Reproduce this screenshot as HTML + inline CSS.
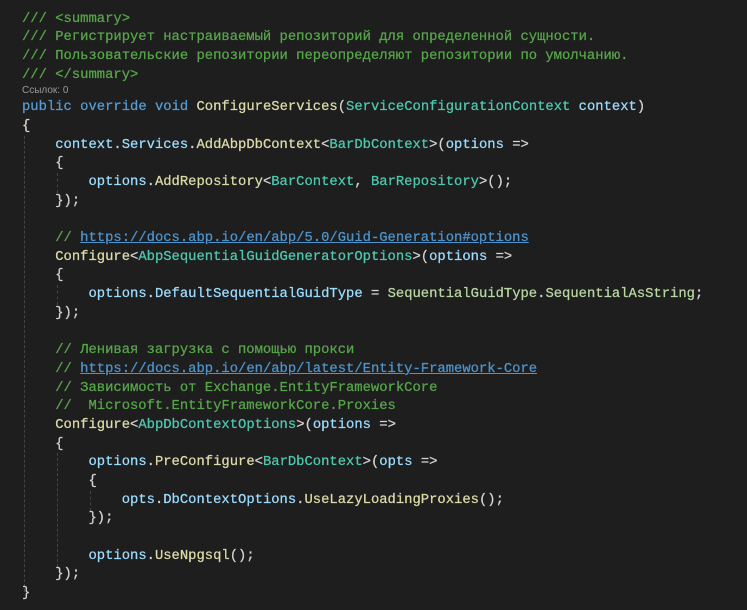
<!DOCTYPE html>
<html><head><meta charset="utf-8"><style>
html,body{margin:0;padding:0;background:#1e1e1e;width:747px;height:610px;overflow:hidden}
.c{position:absolute;left:22px;top:9.5px;font-family:"Liberation Mono","DejaVu Sans Mono",monospace;font-size:13.85px;color:#d4d4d4;-webkit-text-stroke:0.25px currentColor}
.l{height:18.7px;line-height:18.7px;white-space:pre}
.lens{height:14px;line-height:14px;font-family:"Liberation Sans",sans-serif;font-size:10px;color:#999;-webkit-text-stroke:0}
.g{color:#57a64a}.k{color:#569cd6}.m{color:#dcdcaa}.t{color:#4ec9b0}.v{color:#9cdcfe}.e{color:#b8d7a3}
.u{color:#4e94ce;text-decoration:underline}
.ig{position:absolute;width:0;border-left:1px dashed #444}
</style></head><body>
<div class="ig" style="left:24px;top:136px;height:456px"></div>
<div class="ig" style="left:57px;top:173px;height:20px"></div>
<div class="ig" style="left:57px;top:285px;height:20px"></div>
<div class="ig" style="left:57px;top:453px;height:114px"></div>
<div class="ig" style="left:90px;top:491px;height:20px"></div>
<div class="c"><div class="l g">/// &lt;summary&gt;</div><div class="l g">/// Регистрирует настраиваемый репозиторий для определенной сущности.</div><div class="l g">/// Пользовательские репозитории переопределяют репозитории по умолчанию.</div><div class="l g">/// &lt;/summary&gt;</div><div class="lens">Ссылок: 0</div><div class="l"><span class="k">public</span> <span class="k">override</span> <span class="k">void</span> <span class="m">ConfigureServices</span>(<span class="t">ServiceConfigurationContext</span> <span class="v">context</span>)</div><div class="l">{</div><div class="l">    <span class="v">context</span>.<span class="v">Services</span>.<span class="m">AddAbpDbContext</span>&lt;<span class="t">BarDbContext</span>&gt;(<span class="v">options</span> =&gt;</div><div class="l">    {</div><div class="l">        <span class="v">options</span>.<span class="m">AddRepository</span>&lt;<span class="t">BarContext</span>, <span class="t">BarRepository</span>&gt;();</div><div class="l">    });</div><div class="l"> </div><div class="l">    <span class="g">// <span class="u">https://docs.abp.io/en/abp/5.0/Guid-Generation#options</span></span></div><div class="l">    <span class="m">Configure</span>&lt;<span class="t">AbpSequentialGuidGeneratorOptions</span>&gt;(<span class="v">options</span> =&gt;</div><div class="l">    {</div><div class="l">        <span class="v">options</span>.<span class="v">DefaultSequentialGuidType</span> = <span class="e">SequentialGuidType</span>.<span class="e">SequentialAsString</span>;</div><div class="l">    });</div><div class="l"> </div><div class="l g">    // Ленивая загрузка с помощью прокси</div><div class="l">    <span class="g">// <span class="u">https://docs.abp.io/en/abp/latest/Entity-Framework-Core</span></span></div><div class="l g">    // Зависимость от Exchange.EntityFrameworkCore</div><div class="l g">    //  Microsoft.EntityFrameworkCore.Proxies</div><div class="l">    <span class="m">Configure</span>&lt;<span class="t">AbpDbContextOptions</span>&gt;(<span class="v">options</span> =&gt;</div><div class="l">    {</div><div class="l">        <span class="v">options</span>.<span class="m">PreConfigure</span>&lt;<span class="t">BarDbContext</span>&gt;(<span class="v">opts</span> =&gt;</div><div class="l">        {</div><div class="l">            <span class="v">opts</span>.<span class="v">DbContextOptions</span>.<span class="m">UseLazyLoadingProxies</span>();</div><div class="l">        });</div><div class="l"> </div><div class="l">        <span class="v">options</span>.<span class="m">UseNpgsql</span>();</div><div class="l">    });</div><div class="l">}</div></div>
</body></html>
